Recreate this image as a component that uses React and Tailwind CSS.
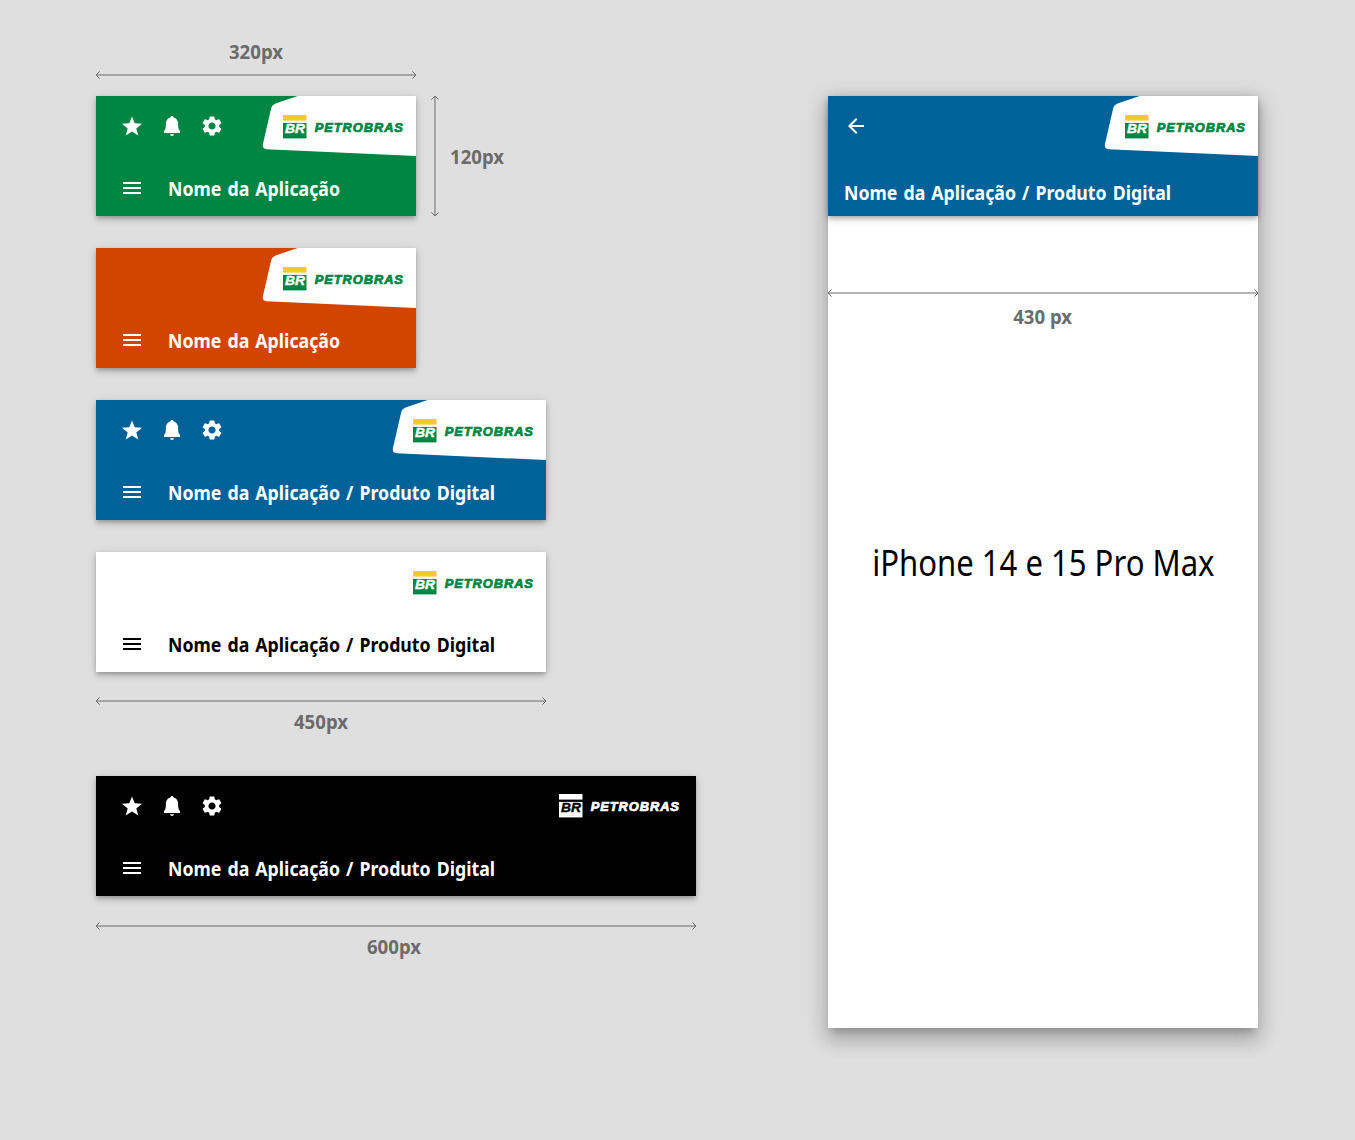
import React from "react";
import { MdSettings, MdMenu, MdArrowBack } from "react-icons/md";

const BAR_SHADOW =
  "shadow-[0_2px_4px_-1px_rgba(0,0,0,0.2),0_4px_5px_0_rgba(0,0,0,0.14),0_1px_10px_0_rgba(0,0,0,0.12)]";

function StarIcon() {
  return (
    <svg width="24" height="24" viewBox="0 0 24 24" fill="currentColor">
      <path d="M12 2.500L14.700 9.300L22 9.700L16.300 14.400L18.300 21.600L12 17.500L5.700 21.600L7.700 14.400L2 9.700L9.300 9.300Z" />
    </svg>
  );
}

function BellIcon() {
  return (
    <svg width="24" height="24" viewBox="0 0 24 24" fill="currentColor">
      <path d="M12 2c-.9 0-1.600.6-1.600 1.500C7.500 4.200 5.900 6.600 5.900 9.600c0 4.200-.3 6.200-1.900 7.500v2h16v-2c-1.600-1.300-1.900-3.300-1.900-7.500 0-3-1.600-5.400-4.500-6.100C13.600 2.600 12.900 2 12 2zM10 20.200c.2.900 1 1.700 2 1.700s1.800-.8 2-1.700z" />
    </svg>
  );
}

function Logo({ mono = false }) {
  const top = mono ? "#ffffff" : "#fdc82f";
  const main = mono ? "#ffffff" : "#008542";
  const letters = mono ? "#000000" : "#ffffff";
  return (
    <svg width="121" height="24" viewBox="0 0 121 24" className="block">
      <rect x="0" y="0" width="23.5" height="5.6" fill={top} />
      <rect x="0" y="7.9" width="23.5" height="15.5" fill={main} />
      <text
        x="2"
        y="17.5"
        textLength="20"
        lengthAdjust="spacingAndGlyphs"
        fontFamily="'Liberation Sans', sans-serif"
        fontWeight="700"
        fontStyle="italic"
        fontSize="13.2"
        fill={letters}
        stroke={letters}
        strokeWidth="0.4"
      >
        BR
      </text>
      <text
        x="31.7"
        y="17.2"
        textLength="89.2"
        lengthAdjust="spacingAndGlyphs"
        letterSpacing="0.9"
        fontFamily="'Liberation Sans', sans-serif"
        fontWeight="700"
        fontStyle="italic"
        fontSize="12"
        fill={main}
        stroke={main}
        strokeWidth="0.7"
      >
        PETROBRAS
      </text>
    </svg>
  );
}

function LogoTab() {
  return (
    <div className="grid h-[60px] w-[154px]">
      <svg width="154" height="60" viewBox="0 0 154 60" className="col-start-1 row-start-1">
        <path
          d="M35.6 0L14.2 7.2Q10 8.7 9.200 12.3L0.9 48.3Q0.1 53 4.6 53.3L154 60V0Z"
          fill="#fff"
        />
      </svg>
      <div className="col-start-1 row-start-1 pl-[21px] pt-[19px]">
        <Logo />
      </div>
    </div>
  );
}

function Title({ children }) {
  return (
    <span className="origin-left scale-x-[0.887] pt-px whitespace-nowrap font-['Noto_Sans',sans-serif] text-[20px] leading-6 font-bold [word-spacing:1.6px]">
      {children}
    </span>
  );
}

function AppBar({ className, title, actions = false, logo = "tab" }) {
  return (
    <header className={`flex h-[120px] flex-col ${BAR_SHADOW} ${className}`}>
      <div className="flex h-[60px] justify-between pl-6">
        <div className="flex gap-4 pt-[18px]">
          {actions && (
            <>
              <StarIcon />
              <BellIcon />
              <MdSettings size={24} />
            </>
          )}
        </div>
        {logo === "tab" && <LogoTab />}
        {logo === "plain" && (
          <div className="pt-[19px] pr-3">
            <Logo />
          </div>
        )}
        {logo === "mono" && (
          <div className="pt-[18px] pr-4">
            <Logo mono />
          </div>
        )}
      </div>
      <div className="flex gap-6 pl-6 pt-5">
        <MdMenu size={24} className="shrink-0" />
        <Title>{title}</Title>
      </div>
    </header>
  );
}

function HorizontalRule({ width }) {
  return (
    <svg
      width={width + 2}
      height="10"
      viewBox={`-1 -5 ${width + 2} 10`}
      className="-mx-px block shrink-0"
      fill="none"
      stroke="#6b6b6b"
    >
      <path d={`M0 0H${width}M3.6 -3.6L0 0L3.6 3.6M${width - 3.6} -3.6L${width} 0L${width - 3.6} 3.6`} />
    </svg>
  );
}

function VerticalRule({ height }) {
  return (
    <svg
      width="10"
      height={height + 2}
      viewBox={`-5 -1 10 ${height + 2}`}
      className="-my-px block shrink-0"
      fill="none"
      stroke="#6b6b6b"
    >
      <path d={`M0 0V${height}M-3.6 3.6L0 0L3.6 3.6M-3.6 ${height - 3.6}L0 ${height}L3.6 ${height - 3.6}`} />
    </svg>
  );
}

function Measure({ children, className = "origin-center" }) {
  return (
    <span
      className={`block scale-x-[0.93] whitespace-nowrap font-['Noto_Sans',sans-serif] text-[20px] leading-6 font-bold text-[#6b6b6b] ${className}`}
    >
      {children}
    </span>
  );
}

export default function App() {
  return (
    <main className="flex h-[1140px] w-[1355px] items-start overflow-hidden bg-[#dfdfdf] pl-24">
      <section className="w-[732px] pt-10">
        <div className="w-[320px] text-center">
          <Measure>320px</Measure>
        </div>
        <div className="mt-1.5">
          <HorizontalRule width={320} />
        </div>
        <div className="mt-4 flex">
          <AppBar className="w-[320px] bg-[#008542] text-white" title="Nome da Aplicação" actions />
          <div className="ml-[14px] flex items-center gap-[10px]">
            <VerticalRule height={120} />
            <Measure className="origin-left pt-0.5">120px</Measure>
          </div>
        </div>
        <AppBar className="mt-8 w-[320px] bg-[#d24400] text-white" title="Nome da Aplicação" />
        <AppBar
          className="mt-8 w-[450px] bg-[#006298] text-white"
          title="Nome da Aplicação / Produto Digital"
          actions
        />
        <AppBar
          className="mt-8 w-[450px] bg-white text-black"
          title="Nome da Aplicação / Produto Digital"
          logo="plain"
        />
        <div className="mt-6">
          <HorizontalRule width={450} />
        </div>
        <div className="mt-1 w-[450px] text-center">
          <Measure>450px</Measure>
        </div>
        <AppBar
          className="mt-[42px] w-[600px] bg-black text-white"
          title="Nome da Aplicação / Produto Digital"
          actions
          logo="mono"
        />
        <div className="mt-[25px]">
          <HorizontalRule width={600} />
        </div>
        <div className="mt-1 w-[596px] text-center">
          <Measure>600px</Measure>
        </div>
      </section>

      <section className="mt-24 flex h-[932px] w-[430px] flex-col items-center bg-white shadow-[0_7px_8px_-4px_rgba(0,0,0,0.2),0_12px_17px_2px_rgba(0,0,0,0.14),0_5px_22px_4px_rgba(0,0,0,0.12)]">
        <header className={`flex h-[120px] w-full flex-col bg-[#006298] text-white ${BAR_SHADOW}`}>
          <div className="flex h-[60px] justify-between pl-4">
            <div className="pt-[18px]">
              <MdArrowBack size={24} />
            </div>
            <LogoTab />
          </div>
          <div className="flex pl-4 pt-6">
            <Title>Nome da Aplicação / Produto Digital</Title>
          </div>
        </header>
        <div className="mt-[72px]">
          <HorizontalRule width={430} />
        </div>
        <div className="mt-[7px]">
          <Measure>430 px</Measure>
        </div>
        <p className="mt-[212px] scale-x-[0.863] whitespace-nowrap font-['Noto_Sans',sans-serif] text-[36px] leading-[44px] text-black">
          iPhone 14 e 15 Pro Max
        </p>
      </section>
    </main>
  );
}
